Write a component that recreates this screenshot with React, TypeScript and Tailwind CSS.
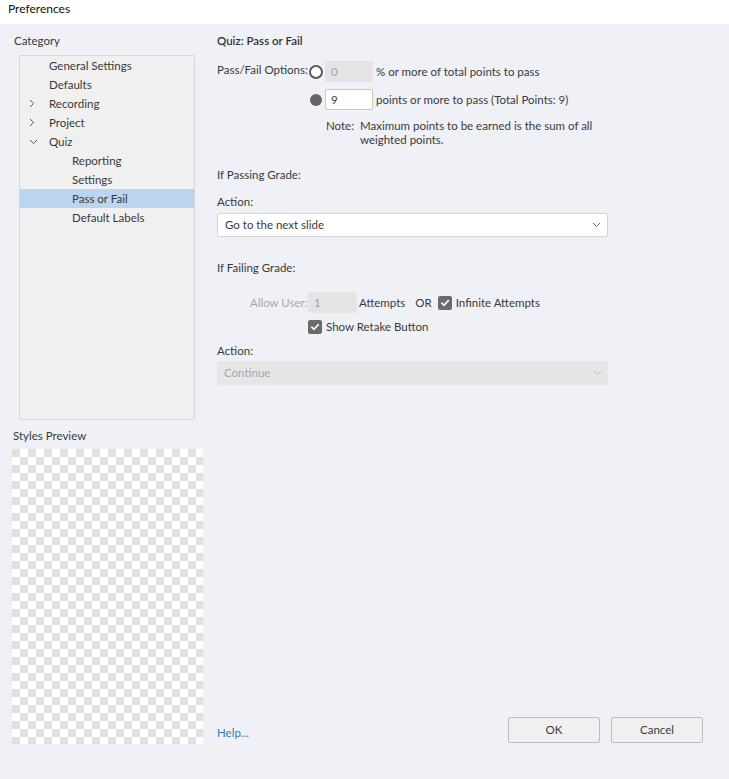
import React from "react";

const Check = () => (
  <span className="w-[14px] h-[14px] rounded-[2px] bg-[#6b6b6b] flex items-center justify-center">
    <svg width="10" height="10" viewBox="0 0 10 10" fill="none">
      <path d="M1.8 5.2 L4 7.3 L8.3 2.6" stroke="#fff" strokeWidth="1.6" strokeLinecap="round" strokeLinejoin="round" />
    </svg>
  </span>
);

const Chevron = ({ color = "#555" }: { color?: string }) => (
  <svg width="9" height="6" viewBox="0 0 9 6" fill="none">
    <path d="M1 1 L4.5 4.5 L8 1" stroke={color} strokeWidth="1" />
  </svg>
);

const TreeRow = ({
  label,
  indent,
  arrow,
  selected,
}: {
  label: string;
  indent: number;
  arrow?: "right" | "down";
  selected?: boolean;
}) => (
  <div className={`h-[19px] flex items-center relative ${selected ? "bg-[#bcd5ee]" : ""}`}>
    {arrow && (
      <span className="absolute left-[9px] top-[5px]">
        {arrow === "right" ? (
          <svg width="6" height="9" viewBox="0 0 6 9" fill="none">
            <path d="M1 1 L4.5 4.5 L1 8" stroke="#555" strokeWidth="1" />
          </svg>
        ) : (
          <svg width="9" height="6" viewBox="0 0 9 6" fill="none" style={{ marginTop: 2 }}>
            <path d="M1 1 L4.5 4.5 L8 1" stroke="#555" strokeWidth="1" />
          </svg>
        )}
      </span>
    )}
    <span style={{ paddingLeft: indent }}>{label}</span>
  </div>
);

export default function App() {
  return (
    <div
      className="w-[729px] h-[779px] bg-[#eff1f7] text-[#3a3a3a] text-[11.5px] flex flex-col overflow-hidden"
      style={{ fontFamily: 'Lato, "Noto Sans", sans-serif' }}
    >
      <div className="h-[24px] bg-white pt-[1px] pl-[8px] text-[12px] leading-[16px] text-[#111]">Preferences</div>
      <div className="flex flex-1">
        {/* Left column */}
        <div className="w-[212px] flex flex-col pl-[12px] pt-[9px]">
          <div className="pl-[2px] h-[16px] leading-[16px]">Category</div>
          <div className="ml-[7px] mt-[6px] w-[176px] h-[365px] bg-[#f0f0f0] border border-[#d6d6d6] rounded-[2px]">
            <TreeRow label="General Settings" indent={29} />
            <TreeRow label="Defaults" indent={29} />
            <TreeRow label="Recording" indent={29} arrow="right" />
            <TreeRow label="Project" indent={29} arrow="right" />
            <TreeRow label="Quiz" indent={29} arrow="down" />
            <TreeRow label="Reporting" indent={52} />
            <TreeRow label="Settings" indent={52} />
            <TreeRow label="Pass or Fail" indent={52} selected />
            <TreeRow label="Default Labels" indent={52} />
          </div>
          <div className="mt-[8px] pl-[1px] h-[16px] leading-[16px]">Styles Preview</div>
          <div className="mt-[5px] w-[191px] h-[295px] bg-[conic-gradient(#ffffff_25%,#e0e0e0_0_50%,#ffffff_0_75%,#e0e0e0_0)] bg-[length:16px_16px]" />
        </div>

        {/* Right column */}
        <div className="flex-1 flex flex-col pl-[5px] pt-[9px] pr-[26px]">
          <div className="h-[16px] leading-[16px] font-semibold text-[#333]">Quiz: Pass or Fail</div>

          <div className="mt-[12px] flex items-start">
            <div className="w-[92px] h-[21px] leading-[21px] -mt-[2px] whitespace-nowrap">Pass/Fail Options:</div>
            <div className="flex flex-col">
              <div className="flex items-center h-[21px]">
                <span className="w-[14px] h-[14px] rounded-full border-2 border-[#5a5a5a] bg-white" />
                <div className="ml-[2px] w-[48px] h-[21px] bg-[#e4e4e4] rounded-[2px] text-[#a0a0a0] pl-[6px] leading-[21px]">0</div>
                <span className="ml-[3px]">% or more of total points to pass</span>
              </div>
              <div className="flex items-center h-[21px] mt-[7px]">
                <span className="ml-[1px] w-[12px] h-[12px] rounded-full bg-[#666]" />
                <div className="ml-[3px] w-[48px] h-[21px] bg-white border border-[#c8c8c8] rounded-[2px] pl-[5px] leading-[19px]">9</div>
                <span className="ml-[3px]">points or more to pass (Total Points: 9)</span>
              </div>
              <div className="flex mt-[9px] pl-[17px] leading-[14px]">
                <span className="w-[34px]">Note:</span>
                <span className="whitespace-nowrap">
                  Maximum points to be earned is the sum of all
                  <br />
                  weighted points.
                </span>
              </div>
            </div>
          </div>

          <div className="mt-[20px] h-[16px] leading-[16px]">If Passing Grade:</div>
          <div className="mt-[11px] h-[16px] leading-[16px]">Action:</div>
          <div className="mt-[3px] w-[391px] h-[24px] bg-white border border-[#d4d4d4] rounded-[2px] flex items-center justify-between pl-[7px] pr-[6px]">
            <span>Go to the next slide</span>
            <Chevron color="#666" />
          </div>

          <div className="mt-[23px] h-[16px] leading-[16px]">If Failing Grade:</div>
          <div className="mt-[16px] flex items-center h-[21px]">
            <span className="ml-[33px] w-[58px] text-[#a8a8a8] whitespace-nowrap">Allow User:</span>
            <div className="w-[49px] h-[21px] bg-[#e4e4e4] rounded-[2px] text-[#a0a0a0] pl-[6px] leading-[21px]">1</div>
            <span className="ml-[2px]">Attempts</span>
            <span className="ml-[10px]">OR</span>
            <span className="ml-[6px]"><Check /></span>
            <span className="ml-[4px]">Infinite Attempts</span>
          </div>
          <div className="mt-[7px] flex items-center h-[14px] pl-[91px]">
            <Check />
            <span className="ml-[4px]">Show Retake Button</span>
          </div>
          <div className="mt-[9px] h-[16px] leading-[16px]">Action:</div>
          <div className="mt-[2px] w-[391px] h-[24px] bg-[#e6e6e6] rounded-[2px] flex items-center justify-between pl-[7px] pr-[6px] text-[#a8a8a8]">
            <span>Continue</span>
            <Chevron color="#bbb" />
          </div>

          <div className="flex-1" />
          <div className="flex items-center justify-between mb-[36px]">
            <span className="text-[#3b78b5] mt-[5px]">Help...</span>
            <div className="flex gap-[11px]">
              <div className="w-[92px] h-[26px] border border-[#bdbdbd] rounded-[2px] bg-[#f0f0f0] flex items-center justify-center">OK</div>
              <div className="w-[92px] h-[26px] border border-[#bdbdbd] rounded-[2px] bg-[#f0f0f0] flex items-center justify-center">Cancel</div>
            </div>
          </div>
        </div>
      </div>
    </div>
  );
}
